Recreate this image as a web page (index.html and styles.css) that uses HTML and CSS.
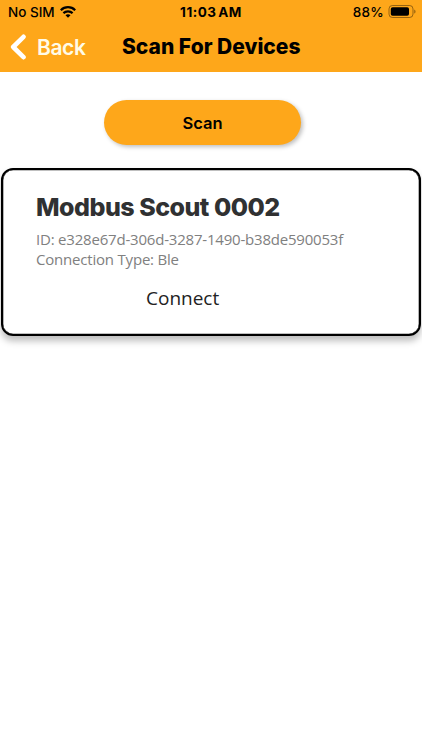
FILE: index.html
```html
<!DOCTYPE html>
<html lang="en">
<head>
<meta charset="utf-8">
<meta name="viewport" content="width=device-width, initial-scale=1">
<title>Scan For Devices</title>
<link rel="stylesheet" href="styles.css">
</head>
<body>
<header class="header">
  <div class="status">
    <div class="status-left">
      <span class="carrier">No SIM</span>
      <svg class="wifi" width="16" height="12" viewBox="0 0 16 12" fill="none" stroke="#000" stroke-width="2.2">
        <path d="M.8 4.2C4.8.2 11.2.2 15.2 4.2"/>
        <path d="M3.4 7.1C6 4.7 10 4.7 12.6 7.1"/>
        <path d="M8 11.8 5.5 9.3C7 8 9 8 10.5 9.3Z" fill="#000" stroke="none"/>
      </svg>
    </div>
    <span class="time">11:03 AM</span>
    <div class="status-right">
      <span class="percent">88%</span>
      <svg class="battery" width="28" height="13" viewBox="0 0 28 13">
        <rect x="1" y=".5" width="24" height="12" rx="3.4" fill="none" stroke="#000" stroke-opacity=".4"/>
        <rect x="2.8" y="2.2" width="18.2" height="8.6" rx="1.8"/>
        <path d="M26.2 4.4c1.8.6 1.8 3.6 0 4.2z" fill-opacity=".4"/>
      </svg>
    </div>
  </div>
  <nav class="nav">
    <a class="back">
      <svg width="18" height="26" viewBox="0 0 18 26" fill="none" stroke="#fff" stroke-width="4.6" stroke-linecap="round" stroke-linejoin="round"><path d="M15.5 2.8 5.2 13 15.5 23.2"/></svg>
      <span class="back-label">Back</span>
    </a>
    <h1 class="title">Scan For Devices</h1>
  </nav>
</header>
<main class="content">
  <button class="scan">Scan</button>
  <section class="card">
    <h2 class="device">Modbus Scout 0002</h2>
    <p class="detail device-id">ID: e328e67d-306d-3287-1490-b38de590053f</p>
    <p class="detail">Connection Type: Ble</p>
    <button class="connect">Connect</button>
  </section>
</main>
</body>
</html>
```
FILE: styles.css
```css
* { box-sizing: border-box; }
body { margin: 0; min-height: 750px; background: #fff; color: #000; font-family: Inter, sans-serif; }
h1, h2, p { margin: 0; white-space: nowrap; }
button { border: 0; padding: 0; color: inherit; }
svg { display: block; flex: none; }
.header { height: 72px; background: #fea71a; }
.status { display: grid; grid-template-columns: 1fr auto 1fr; height: 24px; padding: 0 6px 0 8px; align-items: center; font-size: 13.5px; line-height: 24px; }
.status-left, .status-right { display: flex; align-items: center; }
.status-left { gap: 5px; }
.status-right { justify-content: flex-end; gap: 4px; }
.battery { margin-top: -1px; }
.carrier, .percent { font-weight: 500; }
.percent { letter-spacing: .3px; }
.time { margin-right: 2px; font-weight: 700; letter-spacing: .5px; word-spacing: -2px; }
.nav { display: flex; align-items: center; height: 46px; padding-left: 8px; }
.back { display: flex; align-items: center; gap: 11px; width: 114px; color: #fffbe8; font-size: 21px; font-weight: 600; letter-spacing: -.4px; }
.title { font-size: 21px; font-weight: 800; line-height: 28px; letter-spacing: 0; }
.content { display: flex; flex-direction: column; align-items: center; padding: 28px 1px 0; }
.scan { width: 197px; height: 45px; margin-right: 17px; border-radius: 23px; background: #fea71a; box-shadow: 2px 2px 4px rgba(0,0,0,.25); font: 600 16.5px/45px Inter, sans-serif; padding-top: 1px; }
.card { display: flex; flex-direction: column; align-items: flex-start; width: 420px; height: 168px; margin-top: 23px; padding: 20px 33px 0; border: 2px solid #000; border-radius: 12px; box-shadow: inset 0 0 0 .3px #000, 0 5px 7px rgba(0,0,0,.26); }
.device { color: #303132; font-size: 25px; font-weight: 800; line-height: 34px; letter-spacing: -.5px; }
.detail { color: #808080; font: 400 15px/20px "Open Sans", sans-serif; letter-spacing: -.2px; }
.device-id { margin-top: 4.5px; }
.connect { margin: 16.5px 0 0 110px; background: none; color: #222; font: 400 19px/26px "Open Sans", sans-serif; }
```
